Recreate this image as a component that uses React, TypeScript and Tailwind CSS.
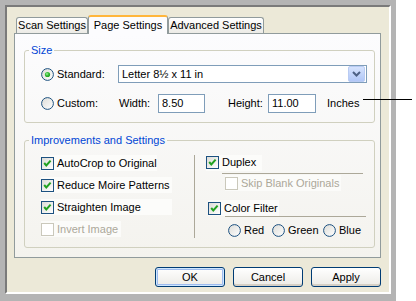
import React from "react";

const font = { fontFamily: '"Liberation Sans", Arial, sans-serif' };

function Radio({ checked }: { checked?: boolean }) {
  return (
    <svg width="13" height="13" viewBox="0 0 13 13" className="shrink-0">
      <defs>
        <linearGradient id="xpRadioBg" x1="0" y1="0" x2="1" y2="1">
          <stop offset="0" stopColor="#DCDCD7" />
          <stop offset="1" stopColor="#FFFFFF" />
        </linearGradient>
        <radialGradient id="xpRadioDot" cx="0.4" cy="0.4" r="0.6">
          <stop offset="0" stopColor="#A6F0A6" />
          <stop offset="0.5" stopColor="#3DC13D" />
          <stop offset="1" stopColor="#1E9E1E" />
        </radialGradient>
      </defs>
      <circle cx="6.5" cy="6.5" r="5.9" fill="url(#xpRadioBg)" stroke="#1C5180" strokeWidth="1" />
      {checked && <circle cx="6.5" cy="6.5" r="2.6" fill="url(#xpRadioDot)" />}
    </svg>
  );
}

function Check({ checked, disabled }: { checked?: boolean; disabled?: boolean }) {
  return (
    <div
      className={
        disabled
          ? "w-[13px] h-[13px] shrink-0 border border-[#CAC8BB] bg-white"
          : "w-[13px] h-[13px] shrink-0 border border-[#1C5180] bg-linear-to-br from-[#DCDCD7] to-white flex items-center justify-center"
      }
    >
      {checked && (
        <svg width="11" height="11" viewBox="0 0 11 11">
          <polyline points="2.2,5 4.3,7.4 8.6,2.6" fill="none" stroke="#21A121" strokeWidth="2" />
        </svg>
      )}
    </div>
  );
}

function DropBtn() {
  return (
    <div className="w-[17px] h-[16px] rounded-[2px] border border-[#B9CBF3] bg-linear-to-b from-[#D6E3FD] to-[#B1C7F7] flex items-center justify-center">
      <svg width="9" height="6" viewBox="0 0 9 6">
        <polyline points="1,1 4.5,4.5 8,1" fill="none" stroke="#4D6185" strokeWidth="2" />
      </svg>
    </div>
  );
}

function Button({ label, focused }: { label: string; focused?: boolean }) {
  return (
    <div
      className={
        focused
          ? "w-[70px] h-[20px] rounded-[3px] border border-[#003C74] bg-linear-to-b from-white to-[#ECEBE6] flex items-center justify-center shadow-[inset_0_0_0_1px_#CEE7FF,inset_0_0_0_2px_#9EBBEE]"
          : "w-[70px] h-[20px] rounded-[3px] border border-[#003C74] bg-linear-to-b from-white to-[#ECEBE6] flex items-center justify-center shadow-[inset_0_-2px_0_#D6D0C5]"
      }
    >
      {label}
    </div>
  );
}

export default function App() {
  return (
    <div
      className="relative w-[416px] h-[301px] bg-white overflow-hidden text-[11px] leading-[13px] text-black"
      style={font}
    >
      <div className="w-[396px] h-[301px] bg-[#B4B4B4] pt-[5px] px-[5px]">
        <div className="h-[289px] border-2 border-t-[#7A7A7A] border-l-[#7A7A7A] border-r-white border-b-white bg-[#ECE9D8] pl-[7px] pr-[8px] pt-[8px] flex flex-col">
          {/* Tabs */}
          <div className="relative z-10 flex items-end h-[18px] pl-[2px]">
            <div className="w-[72px] h-[16px] border border-b-0 border-[#919B9C] rounded-t-[3px] bg-linear-to-b from-white to-[#ECEBE6] flex items-center justify-center">
              Scan Settings
            </div>
            <div className="w-[80px] h-[19px] -mb-px border-x border-x-[#919B9C] border-t-2 border-t-[#FFB63C] rounded-t-[3px] bg-[#FCFCFE] flex items-center justify-center">
              Page Settings
            </div>
            <div className="w-[96px] h-[16px] border border-b-0 border-[#919B9C] rounded-t-[3px] bg-linear-to-b from-white to-[#ECEBE6] flex items-center justify-center">
              Advanced Settings
            </div>
          </div>

          {/* Panel */}
          <div className="h-[225px] border border-[#919B9C] bg-linear-to-b from-[#FCFCFE] to-[#F4F3EE] pl-[9px] pr-[5px] pt-[10px] flex flex-col">
            <fieldset className="h-[79px] border border-[#D0D0BF] rounded-[3px] p-0 m-0 min-w-0">
              <legend className="ml-[4px] px-[2px] text-[#0046D5] leading-[13px]">Size</legend>
              <div className="pl-[16px]">
                <div className="mt-[8px] flex items-center h-[18px]">
                  <div className="w-[77px] flex items-center gap-[3px]">
                    <Radio checked />
                    <span>Standard:</span>
                  </div>
                  <div className="w-[249px] h-[18px] border border-[#7F9DB9] bg-white flex items-center justify-between pl-[3px] pr-px">
                    <span>Letter 8½ x 11 in</span>
                    <DropBtn />
                  </div>
                </div>
                <div className="mt-[11px] flex items-center h-[19px]">
                  <div className="w-[77px] flex items-center gap-[3px]">
                    <Radio />
                    <span>Custom:</span>
                  </div>
                  <span className="w-[40px] pl-px">Width:</span>
                  <div className="w-[47px] h-[19px] border border-[#7F9DB9] bg-white pl-[3px] flex items-center">
                    8.50
                  </div>
                  <span className="ml-[23px] w-[40px]">Height:</span>
                  <div className="w-[48px] h-[19px] border border-[#7F9DB9] bg-white pl-[3px] flex items-center">
                    11.00
                  </div>
                  <span className="ml-[11px]">Inches</span>
                </div>
              </div>
            </fieldset>

            <fieldset className="mt-[11px] h-[114px] border border-[#D0D0BF] rounded-[3px] p-0 m-0 min-w-0">
              <legend className="ml-[4px] px-[2px] text-[#0046D5] leading-[13px]">Improvements and Settings</legend>
              <div className="mt-[5px] flex pl-[16px]">
                <div className="w-[153px] flex flex-col">
                  <div className="h-[22px] flex items-center">
                    <div className="w-[116px] h-[16px] bg-[#FCFCFA] flex items-center gap-[3px]">
                      <Check checked />
                      <span>AutoCrop to Original</span>
                    </div>
                  </div>
                  <div className="h-[22px] flex items-center">
                    <div className="w-[131px] h-[16px] bg-[#FCFCFA] flex items-center gap-[3px]">
                      <Check checked />
                      <span>Reduce Moire Patterns</span>
                    </div>
                  </div>
                  <div className="h-[22px] flex items-center">
                    <div className="w-[131px] h-[16px] bg-[#FCFCFA] flex items-center gap-[3px]">
                      <Check checked />
                      <span>Straighten Image</span>
                    </div>
                  </div>
                  <div className="h-[22px] flex items-center">
                    <div className="w-[80px] h-[16px] bg-[#FBFBF9] flex items-center gap-[3px]">
                      <Check disabled />
                      <span className="text-[#ACA899]">Invert Image</span>
                    </div>
                  </div>
                </div>
                <div className="mt-[3px] w-px h-[83px] bg-[#ACA899]" />
                <div className="pl-[11px] flex flex-col">
                  <div className="h-[21px] flex items-center">
                    <div className="w-[56px] h-[16px] bg-[#FCFCFA] flex items-center gap-[3px]">
                      <Check checked />
                      <span>Duplex</span>
                    </div>
                  </div>
                  <div className="ml-[16px] w-[141px] h-px bg-[#ACA899]" />
                  <div className="h-[18px] pl-[19px] flex items-center">
                    <div className="w-[116px] h-[16px] bg-[#FBFBF9] flex items-center gap-[3px]">
                      <Check disabled />
                      <span className="text-[#ACA899]">Skip Blank Originals</span>
                    </div>
                  </div>
                  <div className="mt-[8px] h-[16px] pl-[2px] flex items-center">
                    <div className="w-[71px] h-[16px] bg-[#FBFBF9] flex items-center gap-[3px]">
                      <Check checked />
                      <span>Color Filter</span>
                    </div>
                  </div>
                  <div className="ml-[19px] w-[141px] h-px bg-[#ACA899]" />
                  <div className="mt-[5px] h-[16px] pl-[22px] flex items-center">
                    <div className="w-[44px] flex items-center gap-[3px]">
                      <Radio />
                      <span>Red</span>
                    </div>
                    <div className="w-[51px] flex items-center gap-[3px]">
                      <Radio />
                      <span>Green</span>
                    </div>
                    <div className="flex items-center gap-[3px]">
                      <Radio />
                      <span>Blue</span>
                    </div>
                  </div>
                </div>
              </div>
            </fieldset>
          </div>

          {/* Buttons */}
          <div className="mt-[9px] flex justify-end gap-[8px]">
            <Button label="OK" focused />
            <Button label="Cancel" />
            <Button label="Apply" />
          </div>
        </div>
      </div>

      {/* Callout line */}
      <div className="absolute top-[99px] left-[363px] w-[49px] h-px bg-black" />
    </div>
  );
}
